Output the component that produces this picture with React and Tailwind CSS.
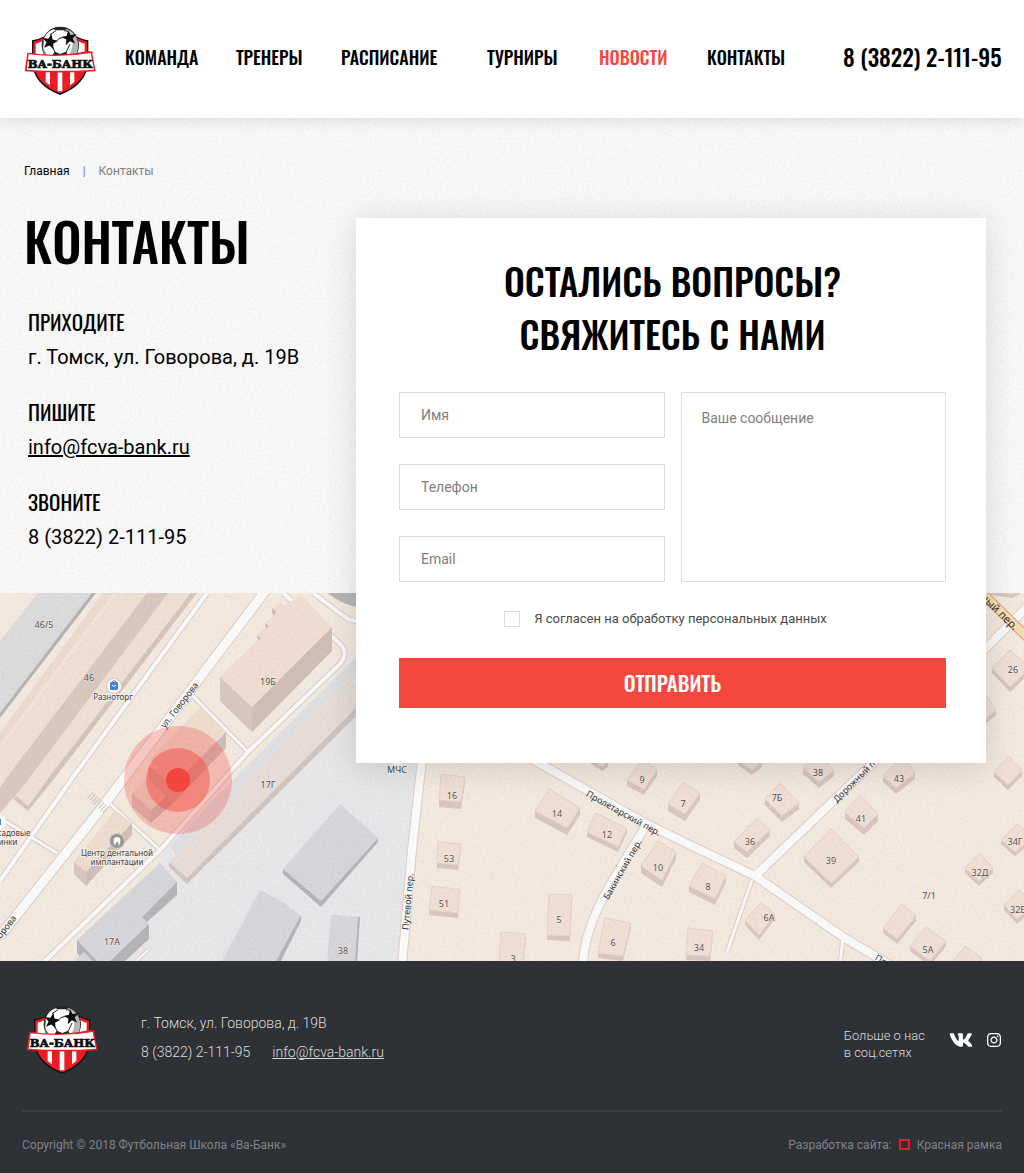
import React from "react";
import { FaVk, FaInstagram } from "react-icons/fa";

const DISPLAY = "font-['Oswald','Liberation_Sans',sans-serif]";

const NAV = [
  { label: "Команда" },
  { label: "Тренеры" },
  { label: "Расписание" },
  { label: "Турниры" },
  { label: "Новости", active: true },
  { label: "Контакты" },
];

function Star({ x, y, r, rot = 0 }) {
  const pts = [];
  for (let i = 0; i < 10; i++) {
    const a = ((i * 36 - 90 + rot) * Math.PI) / 180;
    const k = i % 2 ? r * 0.42 : r;
    pts.push(`${(x + k * Math.cos(a)).toFixed(1)},${(y + k * Math.sin(a)).toFixed(1)}`);
  }
  return <polygon points={pts.join(" ")} fill="#0c0c0c" />;
}

function Logo() {
  return (
    <svg viewBox="72 78 216 210" className="h-[70px] w-[72px] shrink-0" role="img" aria-label="Ва-Банк">
      <path d="M96 121Q116 118 130 110L232 110Q246 118 265 121V190Q258 256 180 285Q102 256 96 190Z" fill="#111" />
      <path d="M100 125Q116 121 130 114L232 114Q246 121 261 125V190Q254 251 180 280Q106 251 100 190Z" fill="#ed1c24" />
      <path d="M107 131Q118 128 130 122L232 122Q242 128 254 131V165H107Z" fill="#fff" />
      <path d="M137 212H150V256L137 246ZM173 212H187V274H173ZM210 212H223V246L210 256Z" fill="#fff" />
      <circle cx="181" cy="136" r="56" fill="#2b2b2b" />
      <circle cx="181" cy="136" r="53" fill="#c4c4c4" />
      <circle cx="176" cy="133" r="47" fill="#fff" />
      <path d="M216 98Q240 122 231 160L206 166Q224 140 214 110Z" fill="#b5b5b5" />
      <path d="M158 86Q180 78 204 86L192 91L168 91Z" fill="#222" />
      <path d="M150 104L168 92M192 92L206 94M172 120Q180 112 188 113M158 142L166 158M210 132L198 158M130 122L128 142" stroke="#222" strokeWidth="3" fill="none" />
      <path d="M128 142L138 162H130Z" fill="#777" />
      <Star x={150} y={126} r={25} rot={10} />
      <Star x={208} y={114} r={24} rot={-10} />
      <path d="M164 155L181 162L198 155L206 168L156 168Z" fill="#222" />
      <path d="M82 158Q180 172 264 153L279 155L277 161L287 214Q180 221 74 214Z" fill="#ed1c24" />
      <path d="M86 163Q180 175 272 159L282 209Q180 216 80 209Z" fill="#fff" />
      <text x="181" y="203" textAnchor="middle" fontFamily="DejaVu Serif, serif" fontWeight="900" fontSize="35" fill="#0c0c0c" stroke="#0c0c0c" strokeWidth="2">
        ВА-БАНК
      </text>
    </svg>
  );
}

/* Each house: left, top, right and bottom roof corners, then wall depth. */
const HOUSES = [
  [439, 800, 441, 774, 465, 777, 461, 802, 7],
  [437, 863, 438, 842, 461, 844, 458, 865, 5],
  [429, 910, 432, 886, 460, 890, 458, 913, 5],
  [535, 811, 549, 789, 580, 808, 567, 828, 7],
  [587, 832, 596, 813, 627, 828, 618, 847, 5],
  [641, 866, 658, 841, 676, 852, 662, 880, 7],
  [547, 935, 549, 894, 572, 895, 570, 936, 5],
  [499, 962, 501, 932, 526, 934, 523, 964, 5],
  [598, 953, 605, 918, 631, 923, 623, 956, 5],
  [627, 780, 643, 758, 657, 770, 644, 789, 6],
  [668, 804, 683, 782, 700, 793, 685, 814, 7],
  [590, 758, 605, 748, 608, 762, 602, 766, 5],
  [738, 760, 750, 745, 762, 762, 752, 770, 5],
  [803, 768, 815, 752, 834, 770, 819, 782, 6],
  [883, 776, 903, 755, 915, 773, 896, 788, 6],
  [765, 799, 780, 783, 799, 803, 782, 816, 6],
  [845, 812, 860, 795, 878, 814, 864, 828, 7],
  [734, 842, 757, 818, 770, 830, 747, 852, 6],
  [804, 857, 831, 829, 859, 857, 831, 883, 5],
  [689, 886, 702, 863, 726, 876, 715, 899, 6],
  [745, 920, 761, 903, 775, 914, 759, 935, 5],
  [686, 955, 688, 928, 713, 931, 710, 956, 5],
  [992, 668, 1010, 650, 1030, 668, 1010, 687, 5],
  [970, 708, 984, 692, 996, 710, 984, 720, 5],
  [994, 772, 1009, 756, 1022, 771, 1008, 785, 5],
  [1001, 840, 1017, 824, 1033, 838, 1015, 852, 4],
  [965, 868, 980, 853, 993, 868, 979, 881, 5],
  [1004, 905, 1019, 890, 1034, 905, 1017, 919, 5],
  [910, 946, 926, 927, 946, 941, 930, 961, 5],
  [883, 928, 902, 904, 916, 916, 897, 939, 5],
  [953, 961, 965, 946, 982, 958, 970, 975, 5],
  [985, 590, 1000, 580, 1020, 590, 1012, 594, 4],
];

const NUMBERS = [
  ["46/5", 44, 628], ["46", 89, 681], ["19Б", 268, 685], ["17Г", 268, 788], ["17А", 112, 945],
  ["38", 343, 954], ["16", 452, 799], ["53", 449, 862], ["51", 444, 907], ["14", 557, 817],
  ["12", 607, 838], ["10", 658, 871], ["5", 559, 923], ["3", 513, 962], ["6", 613, 946],
  ["9", 642, 783], ["7", 683, 807], ["38", 818, 776], ["43", 899, 782], ["7Б", 777, 801],
  ["41", 861, 822], ["36", 750, 845], ["39", 831, 864], ["8", 708, 890], ["6А", 769, 921],
  ["34", 699, 951], ["26", 1013, 673], ["34Г", 1015, 845], ["32Д", 980, 876], ["32Б", 1018, 913],
  ["5А", 928, 953], ["7/1", 929, 899],
];

const ROADS = [
  ["M207 593L76 773L30 838L0 881", 4],
  ["M266 590L158 733L100 810L0 936", 9],
  ["M283 593L338 642Q350 652 340 664L248 752L160 850L45 961", 4],
  ["M192 695L248 752", 3],
  ["M313 593L345 617Q352 622 360 621", 4],
  ["M5 821L57 853", 3],
  ["M108 802L160 850", 3],
  ["M148 950L134 963", 2],
  ["M422 760L412 850L402 965", 8],
  ["M530 758L645 823L690 845L755 876L843 937L890 965", 8],
  ["M645 827L610 885Q584 930 583 965", 8],
  ["M876 760L755 876", 8],
  ["M752 880L727 952", 3],
  ["M843 937L840 965", 3],
  ["M1030 604L980 654", 8],
];

function CityMap() {
  return (
    <svg
      viewBox="0 593 1024 368"
      preserveAspectRatio="xMidYMid slice"
      className="block h-[368px] w-full bg-[#f4eae0]"
      role="img"
      aria-label="Карта: г. Томск, ул. Говорова, д. 19В"
    >
      <rect x="0" y="593" width="1024" height="368" fill="#f4eae0" />
      <path d="M362 651L238 775L163 848L160 863L71 961H402L412 850L422 760V651Z" fill="#e8e8ea" />
      <path d="M362 651L238 775L170 846L176 855L362 672Z" fill="#e0e0e3" />
      <path d="M327 593Q345 606 358 607V593Z" fill="#b8b8b9" />

      <path d="M38 593H93L0 714V641Z" fill="#dcdbdd" />
      <path d="M92 593H96L0 718V713Z" fill="#b5b4b6" />
      <path d="M103 593H193L47 780L22 812L0 838V733Z" fill="#f0e1d5" />
      <path d="M103 593H114L0 746V733Z" fill="#eedbcf" />
      <path d="M115 593L0 747" stroke="#f3e4e0" strokeWidth="3" />
      <path d="M147 593H168L28 780L0 815V788L5 780Z" fill="#d9c9c1" />
      <path d="M191 593H197L50 784L28 811L14 799L16 796L28 806L47 780Z" fill="#d5c5be" />
      <path d="M0 788L7 793L6 818L0 826Z" fill="#d9c9c1" />
      <path d="M0 813L12 799L28 812L0 845Z" fill="#f4eae0" />

      {ROADS.map(([d, w]) => (
        <path key={"c" + d} d={d} fill="none" stroke="#dfcdc8" strokeWidth={w + 2} />
      ))}
      {ROADS.map(([d, w]) => (
        <path key={d} d={d} fill="none" stroke="#fbfbfb" strokeWidth={w} />
      ))}
      <path d="M978 589L1030 640" stroke="#e79a8c" strokeWidth="10" />
      <path d="M978 589L1030 640" stroke="#f8dfae" strokeWidth="8" />
      <path d="M90 795L107 811" stroke="#c9c3bd" strokeWidth="8" strokeDasharray="1 2" />

      <path d="M301 595L332 627L252 707L220 677L258 639L257 635L266 627L265 623L273 616L272 608L280 602L284 606Z" fill="#efddd0" opacity=".92" />
      <path d="M272 608L276 612L273 616ZM265 623L269 626L266 629ZM257 635L261 638L258 641Z" fill="#cdbbb4" />
      <path d="M220 677L252 707V732L220 701Z" fill="#d9c8c1" />
      <path d="M252 707L332 627V651L252 732Z" fill="#d1c0ba" />

      <path d="M200 707L226 732L173 785L151 810L132 793L158 767L149 760Z" fill="#efddd0" />
      <path d="M226 732V748L173 803V785ZM151 810L173 790V803L151 823Z" fill="#d1c0ba" />
      <path d="M149 766L173 786V803L149 780ZM132 793L151 810V823L132 807Z" fill="#d9c8c1" />

      <path d="M115 810L132 823L86 872L74 862Z" fill="#efddd0" />
      <path d="M74 862L86 872V886L74 874Z" fill="#d9c8c1" />
      <path d="M86 872L132 823V835L86 886Z" fill="#d1c0ba" />

      <path d="M348 680L360 690V705L187 878L169 862Z" fill="#e8ddd9" />
      <path d="M169 862L187 878L360 704V712L187 884L169 867Z" fill="#d2c6c2" />

      <path d="M160 863L177 882L142 917L149 924L110 961H97L77 940Z" fill="#d8d7dc" />
      <path d="M177 882V895L147 922L142 917ZM149 924V939L125 961H110ZM77 940L97 961H92L84 952L80 956L77 953Z" fill="#b6b5b8" />
      <path d="M84 952L92 961H75Z" fill="#d8d7dc" />
      <path d="M340 804L378 838L321 901L283 869Z" fill="#d8d7dc" />
      <path d="M283 869L321 901L378 838V842L321 907L283 874Z" fill="#b6b5b8" />
      <path d="M260 890L283 902L301 916L277 961H222Z" fill="#d8d7dc" />
      <path d="M301 915V921L281 961H276Z" fill="#b6b5b8" />
      <path d="M331 915L360 917L357 961H327Z" fill="#d8d7dc" />
      <path d="M358 917H360L357 961H355Z" fill="#b6b5b8" />

      {HOUSES.map(([lx, ly, tx, ty, rx, ry, bx, by, d]) => (
        <g key={`${lx}-${ly}`}>
          <polygon points={`${lx},${ly} ${bx},${by} ${rx},${ry} ${rx},${ry + d} ${bx},${by + d} ${lx},${ly + d}`} fill="#d9c7c0" />
          <polygon points={`${lx},${ly} ${tx},${ty} ${rx},${ry} ${bx},${by}`} fill="#f0e0d5" stroke="#e6d3c9" strokeWidth="1" />
        </g>
      ))}

      <g fontFamily="Noto Sans, sans-serif" fontSize="9" fill="#55514a" textAnchor="middle" stroke="#f6eee6" strokeWidth="1" paintOrder="stroke">
        {NUMBERS.map(([t, x, y]) => (
          <text key={t + x} x={x} y={y}>{t}</text>
        ))}
      </g>
      <g fontFamily="Noto Sans, sans-serif" fontSize="8" fill="#444242" textAnchor="middle" stroke="#f8f2ec" strokeWidth="2" paintOrder="stroke">
        <text x="113" y="700">Разноторг</text>
        <text x="117" y="856">Центр дентальной</text>
        <text x="117" y="865">имплантации</text>
        <text x="14" y="836">садовые</text>
        <text x="8" y="845">инки</text>
        <text x="397" y="773" fontSize="9">МЧС</text>
      </g>
      <g fontFamily="Noto Sans, sans-serif" fontSize="9" fill="#333" textAnchor="middle">
        <text transform="translate(182 707) rotate(-52)">ул. Говорова</text>
        <text transform="translate(0 940) rotate(-52)">ул. Говорова</text>
        <text transform="translate(411 902) rotate(-85)">Путевой пер.</text>
        <text transform="translate(622 816) rotate(29)">Пролетарский пер.</text>
        <text transform="translate(625 871) rotate(-60)">Бакинский пер.</text>
        <text transform="translate(861 779) rotate(-45)">Дорожный пер.</text>
        <text transform="translate(910 981) rotate(31)">Пролетарский пер.</text>
        <text transform="translate(984 602) rotate(44)" fontSize="11">Дорожный пер.</text>
      </g>

      <circle cx="114" cy="686" r="8" fill="#d8cdc4" />
      <circle cx="114" cy="686" r="7" fill="#fff" />
      <rect x="110" y="682" width="8" height="8" rx="1" fill="#4a86cf" />
      <path d="M112 682Q114 679 116 682" stroke="#4a86cf" fill="none" />
      <path d="M112 685Q114 688 116 685" stroke="#fff" fill="none" />
      <circle cx="-1" cy="822" r="7" fill="#fff" />
      <path d="M0 819V825" stroke="#4a86cf" strokeWidth="2" />
      <circle cx="397" cy="758" r="7" fill="#fff" />
      <circle cx="117" cy="841" r="8" fill="#d6d0cb" />
      <circle cx="117" cy="841" r="7" fill="#999" />
      <path d="M114 838Q117 836 120 838Q121 841 119 846L118 842H116L115 846Q113 841 114 838Z" fill="#fff" />

      <circle cx="178" cy="780" r="54" fill="#f5473f" fillOpacity=".28" />
      <circle cx="178" cy="780" r="32" fill="#f5473f" fillOpacity=".45" />
      <circle cx="178" cy="780" r="12" fill="#f5473f" />
    </svg>
  );
}

/* Fine paper grain laid over the page background. */
function Grain() {
  return (
    <svg className="pointer-events-none absolute inset-0 h-full w-full opacity-[0.02]" aria-hidden="true">
      <filter id="grain">
        <feTurbulence type="fractalNoise" baseFrequency="0.4" numOctaves="3" />
        <feColorMatrix values="0 0 0 0 0  0 0 0 0 0  0 0 0 0 0  3 0 0 0 -1" />
      </filter>
      <rect width="100%" height="100%" filter="url(#grain)" />
    </svg>
  );
}

function Field({ id, type, label }) {
  return (
    <input
      id={id}
      type={type}
      aria-label={label}
      placeholder={label}
      className="h-[46px] w-full border border-[#dcdcdc] bg-white px-[21px] text-sm text-black placeholder:text-[#808080]"
    />
  );
}

function Contact({ title, children }) {
  return (
    <section>
      <h2 className={`${DISPLAY} text-[21px] leading-8 uppercase`}>{title}</h2>
      <div className="text-xl leading-[38px]">{children}</div>
    </section>
  );
}

export default function App() {
  return (
    <div className="bg-[#f9f9f9] font-['Roboto',sans-serif] text-black">
      <header className="relative z-10 flex h-[118px] items-center bg-white pr-5 pb-1 pl-6 shadow-[0_2px_14px_rgba(0,0,0,0.12)]">
        <a href="#" className="mt-2 shrink-0">
          <Logo />
        </a>
        <nav className={`${DISPLAY} ml-[29px] grid flex-1 grid-cols-[111fr_105fr_146fr_112fr_108fr_136fr] text-lg leading-7 font-medium uppercase`}>
          {NAV.map((n) => (
            <a key={n.label} href="#" className={n.active ? "text-[#f5473f]" : ""}>
              {n.label}
            </a>
          ))}
        </nav>
        <a href="tel:83822211195" className={`${DISPLAY} w-[161px] shrink-0 text-[23px] leading-8 font-medium whitespace-nowrap`}>
          8 (3822) 2-111-95
        </a>
      </header>

      <main className="relative">
        <Grain />
        <div className="relative z-10 pr-[38px] pl-6">
          <nav aria-label="Навигационная цепочка" className="flex h-[100px] gap-[13px] pt-[45px] text-xs leading-4">
            <a href="#">Главная</a>
            <span className="text-[#808080]">|</span>
            <span className="text-[#808080]">Контакты</span>
          </nav>
          <div className="grid grid-cols-[332px_1fr]">
            <div>
              <h1 className={`${DISPLAY} text-[52px] leading-[46px] font-medium uppercase`}>Контакты</h1>
              <div className="mt-[42px] flex flex-col gap-5 pl-1">
                <Contact title="Приходите">г. Томск, ул. Говорова, д. 19В</Contact>
                <Contact title="Пишите">
                  <a href="mailto:info@fcva-bank.ru" className="underline">info@fcva-bank.ru</a>
                </Contact>
                <Contact title="Звоните">
                  <a href="tel:83822211195">8 (3822) 2-111-95</a>
                </Contact>
              </div>
            </div>

            <form className="bg-white pt-9 pr-10 pb-[55px] pl-[43px] shadow-[0_4px_30px_rgba(0,0,0,0.14)]" onSubmit={(e) => e.preventDefault()}>
              <h2 className={`${DISPLAY} text-center text-[37px] leading-[53px] font-medium uppercase`}>
                Остались вопросы?
                <br />
                Свяжитесь с нами
              </h2>
              <div className="mt-8 grid grid-cols-2 gap-4">
                <div className="flex flex-col gap-[26px]">
                  <Field id="name" type="text" label="Имя" />
                  <Field id="phone" type="tel" label="Телефон" />
                  <Field id="email" type="email" label="Email" />
                </div>
                <textarea
                  aria-label="Ваше сообщение"
                  placeholder="Ваше сообщение"
                  className="resize-none border border-[#dcdcdc] bg-white px-5 py-[15px] text-sm text-black placeholder:text-[#808080]"
                />
              </div>
              <label className="mt-[29px] flex h-4 items-center justify-center gap-[14px] pr-[14px] text-[13px] text-[#4a4a4a]">
                <input type="checkbox" className="size-4 appearance-none border border-[#dcdcdc] bg-white checked:bg-[#f5473f]" />
                Я согласен на обработку персональных данных
              </label>
              <button type="submit" className={`${DISPLAY} mt-[31px] h-[50px] w-full bg-[#f5473f] text-[21px] font-medium text-white uppercase`}>
                Отправить
              </button>
            </form>
          </div>
        </div>
        <div className="-mt-[170px]">
          <CityMap />
        </div>
      </main>

      <footer className="bg-[#2e3136] px-[22px] text-[#dcdcdc]">
        <div className="flex h-[151px] items-center border-b-2 border-[#3a3d42] pt-2 pl-1">
          <Logo />
          <address className="ml-[43px] pb-1 text-sm leading-[29px] font-light not-italic">
            <p>г. Томск, ул. Говорова, д. 19В</p>
            <p className="flex gap-[22px]">
              <a href="tel:83822211195">8 (3822) 2-111-95</a>
              <a href="mailto:info@fcva-bank.ru" className="underline">info@fcva-bank.ru</a>
            </p>
          </address>
          <p className="ml-auto pt-2 text-[13px] leading-[17px] font-light">
            Больше о нас
            <br />в соц.сетях
          </p>
          <a href="#" aria-label="ВКонтакте" className="ml-6 text-white"><FaVk size={24} /></a>
          <a href="#" aria-label="Instagram" className="ml-[13px] text-white"><FaInstagram size={16} /></a>
        </div>
        <div className="flex h-[61px] items-center justify-between pt-1 text-xs text-[#7f8286]">
          <p>Copyright © 2018 Футбольная Школа «Ва-Банк»</p>
          <p className="flex items-center gap-[7px]">
            Разработка сайта:
            <span className="size-[11px] border-2 border-[#ed1c24]" />
            <a href="#">Красная рамка</a>
          </p>
        </div>
      </footer>
    </div>
  );
}
